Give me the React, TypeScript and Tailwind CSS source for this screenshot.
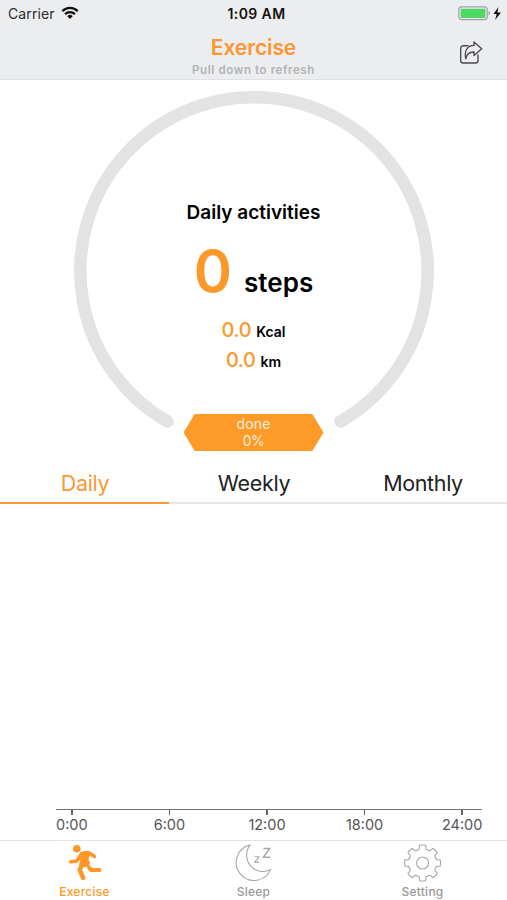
import React from 'react';

const PERIODS = ['Daily', 'Weekly', 'Monthly'];
const HOURS = ['0:00', '6:00', '12:00', '18:00', '24:00'];

const IconWifi = () => (
  <svg width="18" height="14" viewBox="0 0 18 14" fill="none" stroke="#111" strokeWidth="2.3">
    <path d="M1.3 5.1a10.9 10.9 0 0 1 15.4 0" />
    <path d="M4.1 8.1a6.9 6.9 0 0 1 9.8 0" />
    <path d="M9 12.9 6.3 10.2a3.8 3.8 0 0 1 5.4 0z" fill="#111" stroke="none" />
  </svg>
);

const IconBattery = () => (
  <svg width="44" height="16" viewBox="0 0 44 16">
    <rect x="0.8" y="0.9" width="28.4" height="12.8" rx="3" fill="none" stroke="#a0a1a3" strokeWidth="1.2" />
    <rect x="2.6" y="2.7" width="24.8" height="9.2" rx="1" fill="#4cd964" />
    <path d="M30.5 5.1a2.4 2.4 0 0 1 0 4.4z" fill="#a0a1a3" />
    <path d="M40.5 1 35.5 8h3.2l-1.6 6L43 6.4h-3.6z" fill="#111" />
  </svg>
);

const IconShare = () => (
  <svg width="24" height="24" viewBox="0 0 24 24" fill="none" stroke="#4b4b4d" strokeWidth="1.35" strokeLinejoin="round" strokeLinecap="round">
    <path d="M9 4.7H4.2a2.5 2.5 0 0 0-2.5 2.5v12.3a2.5 2.5 0 0 0 2.5 2.5h12.3a2.5 2.5 0 0 0 2.5-2.5v-5.5" />
    <path d="M15 1 22.7 7.8 15 14.6V11c-4.4-.2-7.2 1.6-8.2 6.8C5 10 8.2 4.6 15 4.4z" />
  </svg>
);

const IconRunner = () => (
  <svg width="36" height="38" viewBox="0 0 36 38" fill="none" stroke="#fd9727" strokeLinecap="round" strokeLinejoin="round">
    <circle cx="9.8" cy="4.7" r="3.8" fill="#fd9727" stroke="none" />
    <path d="m14.5 9 6-.8 1.4 2.6-1.5 4.4 1.6 4-3.2 3-5.8-1.8 1.6-6z" fill="#fd9727" strokeWidth="2" />
    <path d="m17 9 4.8-.3 5.6 3.8" strokeWidth="3.6" />
    <path d="m14.5 9.8-4.6 7.2-6.2.8" strokeWidth="3.6" />
    <path d="m15.5 20.5-2.9 5.2 3.5 8.2" strokeWidth="4.6" />
    <path d="m22.2 23.8 2.2 2.2h8.2" strokeWidth="4" />
    <path d="m19 19 3 4" strokeWidth="2.8" />
  </svg>
);

const IconMoon = () => (
  <svg width="40" height="40" viewBox="0 0 40 40" fill="none" stroke="#a8a8a8" strokeWidth="1.1" strokeLinejoin="round">
    <path d="M16.2 1.9A18 18 0 1 0 36.8 26.4 16.3 16.3 0 0 1 16.2 1.9z" />
    <path d="M20.6 13.8h4.4l-4.4 5.6h4.6" />
    <path d="M29.3 5.6h6.4l-6.4 8.6h6.8" strokeWidth="1.5" />
  </svg>
);

const polar = (r: number, deg: number) => {
  const a = ((deg - 90) * Math.PI) / 180;
  return `${(20 + r * Math.cos(a)).toFixed(2)} ${(20 + r * Math.sin(a)).toFixed(2)}`;
};

// Eight teeth with rounded valleys in between
const gearPath =
  Array.from({ length: 8 }, (_, i) => {
    const c = i * 45;
    return `${i === 0 ? 'M' : 'L'}${polar(14.6, c - 13)} L${polar(18, c - 10)} A18 18 0 0 1 ${polar(18, c + 10)} L${polar(14.6, c + 13)} Q${polar(13.2, c + 22.5)} ${polar(14.6, c + 32)}`;
  }).join(' ') + 'Z';

const IconGear = () => (
  <svg width="40" height="40" viewBox="0.4 0 40 40" fill="none" stroke="#a8a8a8" strokeWidth="1.1" strokeLinejoin="round">
    <path d={gearPath} />
    <circle cx="20" cy="20" r="6" />
  </svg>
);

const Header = () => (
  <header className="h-20 bg-[#ecedef] border-b border-[#dfe0e2]">
    <div className="grid grid-cols-3 h-7 items-center">
      <div className="flex items-center gap-1.5 pl-2 pb-0.5">
        <span className="text-[14px] tracking-[0.1px] text-[#2b2b2d]">Carrier</span>
        <IconWifi />
      </div>
      <span className="text-center text-[14px] tracking-[0.4px] font-semibold text-[#111] pl-1.5 pb-px">1:09 AM</span>
      <div className="flex justify-end pr-[5px]">
        <IconBattery />
      </div>
    </div>
    <div className="grid grid-cols-[1fr_200px_1fr]">
      <div />
      <div className="text-center pt-2">
        <h1 className="text-[21px] leading-6 font-semibold tracking-[-0.1px] text-[#fb9631]">Exercise</h1>
        <p className="text-[11.5px] leading-4 mt-[2px] font-semibold tracking-[0.6px] text-[#b2b3b5]">Pull down to refresh</p>
      </div>
      <div className="flex justify-end items-start pt-[13px] pr-6">
        <button aria-label="Share">
          <IconShare />
        </button>
      </div>
    </div>
  </header>
);

const Gauge = () => (
  <section className="relative h-[382px]">
    <svg className="absolute left-[74px] top-[11px]" width="360" height="360" viewBox="0 0 360 360" fill="none">
      <path d="M93.5 330.5A173.7 173.7 0 1 1 266.5 330.5" stroke="#e3e3e3" strokeWidth="12.5" strokeLinecap="round" />
    </svg>
    <div className="relative flex flex-col items-center pt-[120px] text-black">
      <h2 className="text-[19px] leading-[26px] font-semibold">Daily activities</h2>
      <div className="mt-[10px] flex h-[70px] items-baseline leading-[70px]">
        <span className="text-[58px] font-semibold text-[#fd9727]">0</span>
        <span className="ml-3 text-[26px] font-semibold">steps</span>
      </div>
      <div className="mt-[9px] flex h-[30px] items-baseline gap-[5px] leading-[30px]">
        <span className="text-[20px] font-medium tracking-[-0.4px] text-[#fd9727]">0.0</span>
        <span className="text-[14px] font-semibold">Kcal</span>
      </div>
      <div className="flex h-[30px] items-baseline gap-[5px] leading-[30px]">
        <span className="text-[20px] font-medium tracking-[-0.4px] text-[#fd9727]">0.0</span>
        <span className="text-[14px] font-semibold">km</span>
      </div>
      <div className="mt-[39px] h-[37px] w-[140px] bg-[#fd9a28] pt-px text-center text-[14px] leading-[17px] text-[#fff0dc] [clip-path:polygon(8%_0,92%_0,100%_50%,92%_100%,8%_100%,0_50%)]">
        <p className="tracking-[0.2px]">done</p>
        <p className="tracking-[-0.5px]">0%</p>
      </div>
    </div>
  </section>
);

const PeriodTabs = () => (
  <nav className="grid grid-cols-3 h-[42px]">
    {PERIODS.map((period, i) => (
      <button
        key={period}
        className={`pt-[3px] pl-px text-[21.5px] tracking-[-0.35px] border-b-2 ${i === 0 ? 'text-[#f99838] border-[#f99838]' : 'text-[#222] border-[#e8e8e8]'}`}
      >
        {period}
      </button>
    ))}
  </nav>
);

const Chart = () => (
  <section className="flex flex-col justify-end h-[336px] pb-[6px]">
    <div className="ml-[56px] mr-[25px] h-[1.5px] bg-[#707070]" />
    <div className="ml-[23px] grid grid-cols-5 w-[488px]">
      {HOURS.map((hour) => (
        <div key={hour} className="flex flex-col items-center">
          <div className="h-[5px] w-[1.5px] bg-[#666]" />
          <span className="mt-px text-[14.5px] leading-[18px] text-[#555]">{hour}</span>
        </div>
      ))}
    </div>
  </section>
);

const TabBar = () => (
  <footer className="grid grid-cols-3 h-[60px] border-t border-[#e2e2e2] text-[12px] font-medium tracking-[0.25px] text-[#999]">
    <div className="flex flex-col items-center text-[#fd9727]">
      <div className="flex h-11 items-center pb-[1px]">
        <IconRunner />
      </div>
      <span className="leading-[13px]">Exercise</span>
    </div>
    <div className="flex flex-col items-center">
      <div className="flex h-11 items-center">
        <IconMoon />
      </div>
      <span className="leading-[13px]">Sleep</span>
    </div>
    <div className="flex flex-col items-center">
      <div className="flex h-11 items-center">
        <IconGear />
      </div>
      <span className="leading-[13px]">Setting</span>
    </div>
  </footer>
);

const App: React.FC = () => {
  return (
    <div className="h-[900px] w-[507px] overflow-hidden bg-white font-['Inter',sans-serif]">
      <Header />
      <Gauge />
      <PeriodTabs />
      <Chart />
      <TabBar />
    </div>
  );
};

export default App;
